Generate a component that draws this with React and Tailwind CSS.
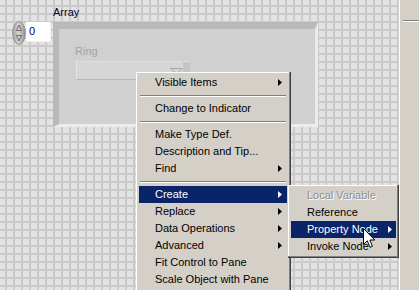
import React from 'react';

const mainItems = [
  { label: 'Visible Items', arrow: true },
  { sep: true },
  { label: 'Change to Indicator' },
  { sep: true },
  { label: 'Make Type Def.' },
  { label: 'Description and Tip...' },
  { label: 'Find', arrow: true },
  { sep: true },
  { label: 'Create', arrow: true, active: true },
  { label: 'Replace', arrow: true },
  { label: 'Data Operations', arrow: true },
  { label: 'Advanced', arrow: true },
  { label: 'Fit Control to Pane' },
  { label: 'Scale Object with Pane' },
];

const subItems = [
  { label: 'Local Variable', disabled: true },
  { label: 'Reference' },
  { label: 'Property Node', arrow: true, active: true },
  { label: 'Invoke Node', arrow: true },
];

function Arrow({ white }) {
  return (
    <svg width="4" height="7" viewBox="0 0 4 7">
      <polygon points="0,0 4,3.5 0,7" fill={white ? '#ffffff' : '#000000'} />
    </svg>
  );
}

function MenuRow({ item, rightPad }) {
  if (item.sep) {
    return (
      <div className="h-[9px] px-px pt-[4px]">
        <div className="h-px bg-[#808080]" />
        <div className="h-px bg-white" />
      </div>
    );
  }
  let tone = 'text-black';
  if (item.active) tone = 'bg-[#0a246a] text-white';
  if (item.disabled) tone = 'text-[#8d8d8d] [text-shadow:1px_1px_0_#ffffff]';
  return (
    <div className={`flex h-[17px] items-center pl-4 ${rightPad} ${tone}`}>
      <span className="flex-1 whitespace-nowrap">{item.label}</span>
      {item.arrow && <Arrow white={item.active} />}
    </div>
  );
}

function Spinner() {
  return (
    <svg width="14" height="24" viewBox="0 0 14 24">
      <defs>
        <linearGradient id="spin" x1="0" x2="1" y1="0" y2="0">
          <stop offset="0" stopColor="#9f9f9f" />
          <stop offset="0.45" stopColor="#d4d4d4" />
          <stop offset="1" stopColor="#949494" />
        </linearGradient>
      </defs>
      <ellipse cx="7" cy="12" rx="6.3" ry="11.4" fill="url(#spin)" stroke="#8f8f8f" />
      <polygon points="7,4 9.5,9.5 4.5,9.5" fill="none" stroke="#707070" />
      <polygon points="7,20 9.5,14.5 4.5,14.5" fill="none" stroke="#707070" />
    </svg>
  );
}

function Cursor() {
  return (
    <svg width="13" height="21" viewBox="0 0 13 21">
      <path
        d="M0.5 0.5 L0.5 16.5 L4.3 12.8 L7 19.3 L9.4 18.3 L6.8 12 L11.8 12 Z"
        fill="#ffffff"
        stroke="#000000"
        strokeLinejoin="miter"
      />
    </svg>
  );
}

export default function App() {
  return (
    <div className="flex h-[290px] w-[419px] overflow-hidden font-['Liberation_Sans',Arial,sans-serif] text-[11px] leading-none">
      {/* front panel */}
      <div className="relative flex-1 bg-[#e3e3e3] bg-[linear-gradient(to_right,#cacaca_2px,transparent_2px),linear-gradient(to_bottom,#cacaca_2px,transparent_2px)] bg-[size:8px_8px] bg-[position:5px_5px]">
        {/* array label */}
        <div className="absolute left-[53px] top-[7px] text-[#000033]">Array</div>

        {/* index display */}
        <div className="absolute left-[12px] top-[21px] flex items-start">
          <Spinner />
          <div className="mt-px flex h-[20px] w-[25px] items-center border-r border-b border-[#efefef] bg-white pl-[3px] text-[#000066]">
            0
          </div>
        </div>

        {/* array frame */}
        <div className="absolute left-[53px] top-[22px] h-[105px] w-[265px] border-t-[7px] border-l-[6px] border-r-[3px] border-b-[3px] border-t-[#b9b9b9] border-l-[#b9b9b9] border-r-[#ececec] border-b-[#ececec] bg-[#d0d0d0]">
          <div className="absolute left-[16px] top-[17px] text-[#a3a3a8]">Ring</div>
          <div className="absolute left-[17px] top-[32px] flex h-[19px] w-[114px] border-t border-l border-b border-t-[#dedede] border-l-[#e4e4e4] border-b-[#b8b8b8] bg-[#d6d6d6]">
            <div className="flex-1" />
            <div className="flex w-[14px] justify-center pt-[6px]">
              <svg width="13" height="6" viewBox="0 0 13 6">
                <polygon points="0.5,0.5 12.5,0.5 6.5,5.5" fill="none" stroke="#a8a8a8" />
              </svg>
            </div>
            <div className="w-[7px] bg-[#c6c6c6]" />
          </div>
        </div>

        {/* context menu */}
        <div className="absolute left-[136px] top-[72px] h-[230px] w-[155px] bg-[#d4d0c8] pt-[2px] pl-[3px] pr-[4px] shadow-[inset_-1px_-1px_0_#404040,inset_-2px_-2px_0_#808080,inset_1px_1px_0_#ffffff]">
          {mainItems.map((it, i) => (
            <MenuRow key={i} item={it} rightPad="pr-[5px]" />
          ))}
        </div>

        {/* submenu */}
        <div className="absolute left-[288px] top-[185px] h-[73px] w-[111px] bg-[#d4d0c8] pt-[2px] pl-[3px] pr-[3px] shadow-[inset_-1px_-1px_0_#404040,inset_-2px_-2px_0_#808080,inset_1px_1px_0_#ffffff]">
          {subItems.map((it, i) => (
            <MenuRow key={i} item={it} rightPad="pr-[4px]" />
          ))}
        </div>

        {/* mouse pointer */}
        <div className="absolute left-[363px] top-[228px]">
          <Cursor />
        </div>
      </div>

      {/* right panel */}
      <div className="w-[20px] border-l border-white bg-[#d4d0c8] pt-[20px] pl-[3px]">
        <div className="h-px bg-[#808080]" />
        <div className="h-px bg-white" />
      </div>
    </div>
  );
}
